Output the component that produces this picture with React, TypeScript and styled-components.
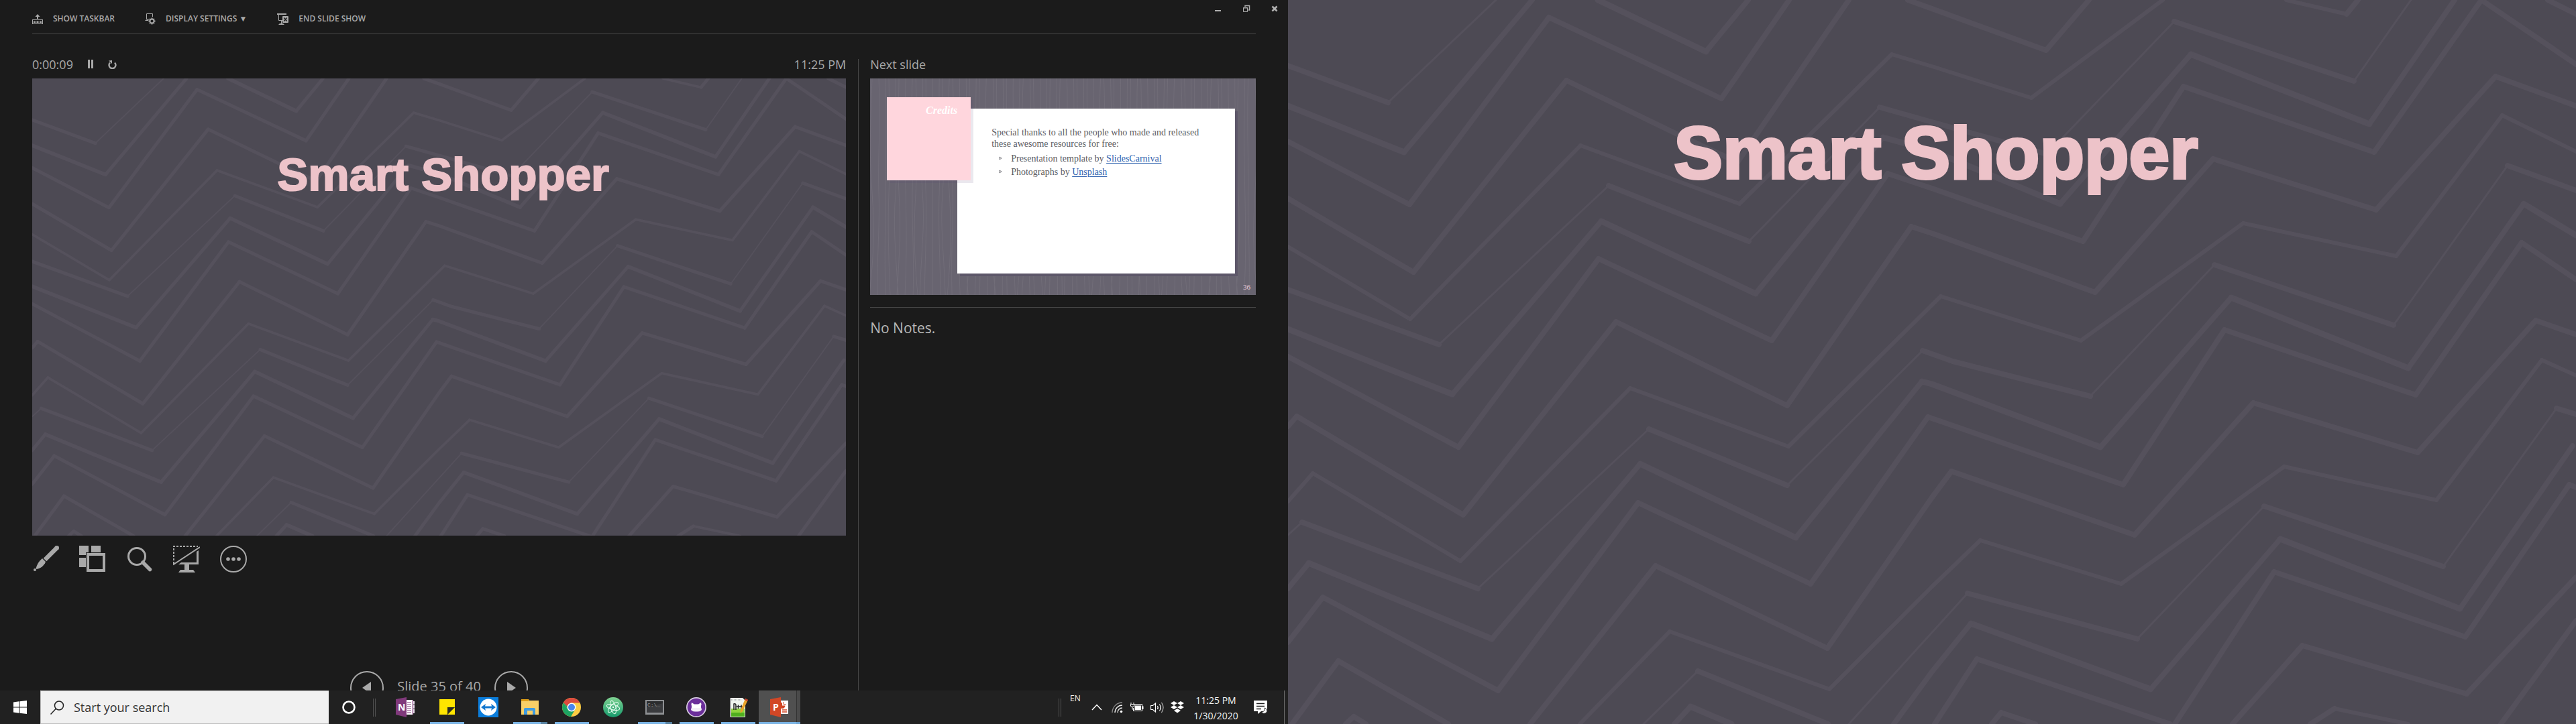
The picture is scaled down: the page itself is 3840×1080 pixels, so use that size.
import React from "react";
import styled, { createGlobalStyle, css } from "styled-components";

const uiFont = `"Open Sans", "Noto Sans", sans-serif`;
const slideFont = `"Liberation Sans", Arial, sans-serif`;
const serifFont = `"Liberation Serif", "Times New Roman", serif`;

const GlobalStyle = createGlobalStyle`
  *, *::before, *::after { box-sizing: border-box; }
  body { margin: 0; background: #1b1b1b; font-family: ${uiFont}; }
  button { border: 0; padding: 0; background: none; color: inherit; font: inherit; cursor: pointer; }
  h1, h2, p, ul { margin: 0; padding: 0; font-weight: inherit; }
  svg { display: block; flex: none; }
`;

/* ------------------------------------------------------------------ */
/* Zigzag slide background                                              */
/* ------------------------------------------------------------------ */

type Trace = { pts: number[]; fall?: number; rise?: number };

// Each trace is a run of x, y pairs on a square grid of 3136 units.
const GRID = 3136;
const traces: Trace[] = [
  { pts: [0, 285, 244, 444, 507, 0], rise: 3 },
  { pts: [0, 460, 282, 660, 595, 0], fall: 9 },
  { pts: [0, 613, 295, 885, 635, 76, 1055, 428, 1220, 0] },
  { pts: [755, 0, 1018, 223, 1120, 0], fall: 9 },
  { pts: [0, 860, 306, 1180, 678, 348, 950, 584, 1095, 703, 1365, 0] },
  { pts: [0, 1070, 298, 1382, 712, 630, 1100, 884, 1470, 235, 1568, 287, 1810, 425, 2130, 0], fall: 6, rise: 6 },
  { pts: [1510, 0, 1568, 38, 1845, 218, 1950, 0] },
  { pts: [0, 1255, 368, 1492, 780, 805, 1122, 1046, 1440, 466, 1568, 528, 1848, 668, 2158, 92, 2595, 350, 2735, 0], rise: 3 },
  { pts: [0, 1425, 400, 1708, 762, 957, 1138, 1272, 1448, 595, 1568, 652, 1880, 883, 2198, 234, 2633, 538, 2840, 0], fall: 9 },
  { pts: [0, 1545, 415, 1936, 756, 1122, 1178, 1476, 1460, 752, 1568, 817, 1936, 1045, 2180, 374, 2645, 658, 2905, 0, 3136, 280] },
  { pts: [0, 1848, 22, 1803, 427, 2230, 798, 1395, 1215, 1756, 1518, 982, 1568, 1010, 1965, 1267, 2253, 687, 2650, 908, 2940, 330, 3136, 460] },
  { pts: [0, 2173, 60, 2050, 420, 2430, 833, 1680, 1218, 1933, 1590, 1282, 1930, 1475, 2326, 966, 2698, 1110, 2956, 498, 3136, 655], fall: 6, rise: 6 },
  { pts: [0, 2318, 35, 2262, 462, 2548, 878, 1858, 1216, 2103, 1545, 1520, 1618, 1564, 1953, 1716, 2256, 1147, 2692, 1408, 2970, 718, 3136, 825], rise: 3 },
  { pts: [0, 2548, 50, 2440, 497, 2766, 858, 2010, 1237, 2328, 1543, 1652, 1568, 1665, 1978, 1938, 2296, 1290, 2728, 1593, 3008, 884, 3136, 1020], fall: 9 },
  { pts: [0, 2783, 85, 2588, 512, 2990, 852, 2178, 1272, 2530, 1558, 1806, 2033, 2098, 2280, 1430, 2746, 1711, 3003, 1050, 3136, 1210] },
  { pts: [10, 3136, 122, 2862, 390, 3136] },
  { pts: [590, 3136, 895, 2451, 1314, 2808, 1568, 2155, 1616, 2040, 2061, 2318, 2350, 1745, 2750, 1961, 3038, 1387, 3136, 1450] },
  { pts: [710, 3136, 930, 2735, 1318, 2986, 1568, 2540, 1686, 2340, 2028, 2528, 2426, 2020, 2796, 2166, 3053, 1558, 3136, 1625], fall: 6, rise: 6 },
  { pts: [865, 3136, 998, 2908, 1315, 3136], rise: 3 },
  { pts: [1365, 3136, 1655, 2570, 2068, 2766, 2376, 2193, 2813, 2454, 3088, 1768, 3136, 1795], rise: 3 },
  { pts: [940, 3136, 980, 3060, 1080, 3136], fall: 9 },
  { pts: [1475, 3136, 1568, 2910, 1663, 2700, 2100, 2984, 2416, 2335, 2853, 2638, 3128, 1930], fall: 9 },
  { pts: [1575, 3136, 1678, 2855, 2148, 3136] },
  { pts: [2160, 3136, 2401, 2478, 2866, 2758, 3120, 2098, 3136, 2112] },
  { pts: [140, 3136, 160, 3104, 190, 3136] },
  { pts: [1713, 3136, 1736, 3088, 1820, 3136] },
  { pts: [2300, 3136, 2470, 2795, 2870, 3006, 3136, 2500] },
  { pts: [2490, 3136, 2548, 3068, 2728, 3136], fall: 6 },
  { pts: [2953, 3136, 3136, 2690] },
  { pts: [2430, 0, 2578, 62, 2605, 0], fall: 6 },
  { pts: [3068, 0, 3136, 62] },
];

function segments(trace: Trace) {
  const falls: string[] = [];
  const rises: string[] = [];
  const p = trace.pts;
  const px = (x: number) => Math.round((x / GRID) * 1920);
  const py = (y: number) => Math.round((y / GRID) * 1080);
  for (let i = 0; i + 3 < p.length; i += 2) {
    const d = `M${px(p[i])} ${py(p[i + 1])}L${px(p[i + 2])} ${py(p[i + 3])}`;
    (p[i + 3] > p[i + 1] ? falls : rises).push(d);
  }
  return { falls: falls.join(""), rises: rises.join("") };
}

const Backdrop = styled.svg`
  position: absolute;
  inset: 0;
  width: 100%;
  height: 100%;
`;

const Zigzag = () => (
  <Backdrop viewBox="0 0 1920 1080" preserveAspectRatio="none" aria-hidden="true">
    <g fill="none" stroke="#55515c" strokeLinecap="round">
      {traces.map((t, i) => {
        const s = segments(t);
        return (
          <g key={i}>
            <path d={s.falls} strokeWidth={t.fall ?? 8} />
            <path d={s.rises} strokeWidth={t.rise ?? 8} />
          </g>
        );
      })}
    </g>
  </Backdrop>
);

const SlideBox = styled.section<{ $full?: boolean }>`
  position: relative;
  overflow: hidden;
  background: #4d4a54;
  ${(p) => (p.$full ? css`height: 100%;` : css`aspect-ratio: 16 / 9;`)}
`;

const SlideTitle = styled.h1<{ $size: number; $top: number }>`
  position: relative;
  padding: ${(p) => p.$top}px 0 0 12px;
  text-align: center;
  font: bold ${(p) => p.$size}px/1 ${slideFont};
  color: #edc3c9;
  -webkit-text-stroke: ${(p) => (p.$size > 100 ? 4 : 2)}px #edc3c9;
  stroke-linejoin: round;
  paint-order: stroke fill;
`;

const Slide = ({ size, top, full }: { size: number; top: number; full?: boolean }) => (
  <SlideBox $full={full}>
    <Zigzag />
    <SlideTitle $size={size} $top={top}>Smart Shopper</SlideTitle>
  </SlideBox>
);

/* ------------------------------------------------------------------ */
/* Presenter view                                                       */
/* ------------------------------------------------------------------ */

const Desktop = styled.div`
  display: grid;
  grid-template-columns: 1fr 1fr;
  height: 100vh;
`;

const Monitor = styled.div`
  display: flex;
  flex-direction: column;
  min-width: 0;
  min-height: 0;
`;

const Presenter = styled.main`
  flex: 1;
  min-height: 0;
  overflow: hidden;
  background: #1b1b1b;
  color: #a9a9a9;
`;

const TopBar = styled.header`
  display: flex;
  justify-content: space-between;
  height: 50px;
  padding: 0 14px 0 48px;
`;

const Commands = styled.nav`
  display: flex;
  gap: 45px;
  padding-top: 18px;
`;

const Command = styled.button`
  display: flex;
  align-items: center;
  gap: 15px;
  height: 20px;
  font-size: 12px;
  font-weight: 600;
  line-height: 20px;
  white-space: nowrap;
`;

const WindowButtons = styled.div`
  display: flex;
  gap: 30px;
  padding-top: 7px;
  height: 19px;
`;

const Rule = styled.hr<{ $inset?: boolean }>`
  height: 1px;
  border: 0;
  margin: ${(p) => (p.$inset ? "0 48px" : "18px 0 0")};
  background: #484848;
`;

const Panes = styled.div`
  display: grid;
  grid-template-columns: 27fr 13fr;
  padding: 37px 48px 0;
`;

const CurrentPane = styled.section`
  padding-right: 18px;
  min-width: 0;
`;

const NextPane = styled.section`
  padding-left: 17px;
  border-left: 1px solid #484848;
  min-width: 0;
`;

const StatusRow = styled.div`
  display: flex;
  align-items: center;
  height: 29px;
  padding-bottom: 14px;
  font-size: 18px;
  line-height: 16px;
`;

const Clock = styled.time`
  margin-left: auto;
`;

const TimerButton = styled.button`
  margin-left: 22px;
`;

const Tools = styled.div`
  display: flex;
  gap: 30px;
  margin-top: 14px;
`;

const Pager = styled.div`
  display: flex;
  justify-content: center;
  gap: 20px;
  margin-top: 147px;
  font-size: 20px;
  line-height: 46px;
`;

const Round = styled.button`
  display: grid;
  place-items: center;
  width: 50px;
  height: 50px;
  border: 2px solid #a9a9a9;
  border-radius: 50%;
`;

const Notes = styled.p`
  margin-top: 12px;
  font-size: 21px;
  line-height: 36px;
  color: #b8b8b8;
`;

/* Credits slide */

const Credits = styled.div`
  position: relative;
  display: flex;
  aspect-ratio: 16 / 9;
  padding: 45px 31px 32px 130px;
  background: #686470;
  overflow: hidden;
  font-family: ${serifFont};
`;

const Paper = styled.div`
  position: relative;
  flex: 1;
  padding: 27px 40px 0 51px;
  background: #fff;
  box-shadow: 4px 4px 0 #5d5769;
  color: #5d5d63;
  font-size: 14px;
  line-height: 17px;
`;

const Tag = styled.h2`
  position: absolute;
  left: 25px;
  top: 28px;
  width: 125px;
  height: 124px;
  padding: 10px 20px 0 0;
  text-align: right;
  background: #ffd6dd;
  box-shadow: 4px 4px 0 rgba(80, 62, 118, 0.12);
  color: #fff;
  font: italic bold 16px/20px ${serifFont};
`;

const Bullets = styled.ul`
  list-style: none;
  padding-top: 3px;
`;

const Bullet = styled.li`
  display: flex;
  align-items: center;
  gap: 13px;
  height: 20px;
  padding-left: 11px;
`;

const CreditLink = styled.a`
  color: #2f62ae;
  text-underline-offset: 2px;
`;

const PageNumber = styled.span`
  position: absolute;
  right: 8px;
  bottom: 5px;
  font-size: 11px;
  line-height: 14px;
  color: #f3ccd3;
`;

const grain = Array.from({ length: 74 }, (_, i) => {
  const x = 3 + i * 8 + ((i * 37) % 5);
  const a = ((i * 13) % 7) - 3;
  const b = ((i * 29) % 9) - 4;
  return `M${x} 0C${x + a} 80 ${x + b} 120 ${x} 170S${x - a} 260 ${x + b} 323`;
}).join("");

const WoodGrain = () => (
  <Backdrop viewBox="0 0 574 323" preserveAspectRatio="none" aria-hidden="true">
    <path d={grain} fill="none" stroke="#716d78" strokeWidth="1" />
  </Backdrop>
);

const NextSlide = () => (
  <Credits>
    <WoodGrain />
    <Paper>
      <p>Special thanks to all the people who made and released these awesome resources for free:</p>
      <Bullets>
        <Bullet>
          <BulletMark />
          <span>Presentation template by <CreditLink href="#slidescarnival">SlidesCarnival</CreditLink></span>
        </Bullet>
        <Bullet>
          <BulletMark />
          <span>Photographs by <CreditLink href="#unsplash">Unsplash</CreditLink></span>
        </Bullet>
      </Bullets>
    </Paper>
    <Tag>Credits</Tag>
    <PageNumber>36</PageNumber>
  </Credits>
);

const BulletMark = () => (
  <svg width="5" height="6" viewBox="0 0 5 6" aria-hidden="true">
    <path d="M1 1L4 3L1 5Z" fill="none" stroke="#77777d" />
  </svg>
);

/* Toolbar icons */

const TaskbarIcon = () => (
  <svg width="16" height="16" viewBox="0 0 16 16" fill="#a9a9a9">
    <path d="M8 1L11.500 5H9V8H7V5H4.500Z" />
    <path d="M0 9H16V16H0ZM1 10V15H15V10Z" fillRule="evenodd" />
    <path d="M2 11.500H5V14H2ZM6.500 11.500H9.500V14H6.500ZM11 11.500H14V14H11Z" />
  </svg>
);

const DisplayIcon = () => (
  <svg width="16" height="18" viewBox="0 0 16 18" fill="none" stroke="#a9a9a9">
    <path d="M7 9.500H2.500V1.500H11.500V6" />
    <path d="M0 12L1.500 10.500H5.500L5 12Z" fill="#a9a9a9" stroke="none" />
    <circle cx="10.500" cy="12.500" r="3" strokeWidth="1.800" />
    <path d="M10.500 7.500V9M10.500 16V17.500M5.500 12.500H7M14 12.500H15.500M7 9L8 10M13 15L14 16M7 16L8 15M13 10L14 9" strokeWidth="1.800" />
  </svg>
);

const EndIcon = () => (
  <svg width="17" height="18" viewBox="0 0 17 18" fill="#a9a9a9">
    <path d="M0 1H14V3H0Z" />
    <path d="M2.500 3V11.500H8" fill="none" stroke="#a9a9a9" />
    <path d="M6 11H7V16H9L11 18H2L4 16H6Z" />
    <rect x="8" y="5" width="9" height="10" rx="1" />
    <path d="M10.500 7.500L14.500 12.500M14.500 7.500L10.500 12.500" stroke="#1b1b1b" strokeWidth="1.500" />
  </svg>
);

const ResetIcon = () => (
  <svg width="13" height="14" viewBox="0 0 13 14" fill="none" stroke="#a9a9a9" strokeWidth="2.400">
    <path d="M3 4.500A5 5 0 1 0 10 4.500" />
    <path d="M1 1.500L6 1L6 6Z" fill="#a9a9a9" stroke="none" />
  </svg>
);

const ToolIcon = ({ children }: { children: React.ReactNode }) => (
  <svg width="40" height="41" viewBox="0 0 40 41" fill="#a9a9a9">{children}</svg>
);

const PenTool = () => (
  <ToolIcon>
    <path d="M37 4L19 22" stroke="#a9a9a9" strokeWidth="6.500" strokeLinecap="butt" />
    <circle cx="36.700" cy="4.300" r="3.300" />
    <path d="M15 20L20 25C18 31 12 35 6.500 36L5.500 35C7 29 10 24 15 20Z" />
    <circle cx="4" cy="37" r="2" />
  </ToolIcon>
);

const GridTool = () => (
  <ToolIcon>
    <path d="M0 1H14V11H10V15H0ZM18 1H32V11H18ZM0 19H10V33H0Z" />
    <path d="M11 12H39V40H11ZM15 16V36H35V16Z" fillRule="evenodd" />
  </ToolIcon>
);

const ZoomTool = () => (
  <ToolIcon>
    <circle cx="16" cy="17" r="12.500" fill="none" stroke="#a9a9a9" strokeWidth="3" />
    <path d="M25 26L35.500 36.500" stroke="#a9a9a9" strokeWidth="5.500" strokeLinecap="round" />
  </ToolIcon>
);

const BlackoutTool = () => (
  <ToolIcon>
    <path d="M1 28V2H37" fill="none" stroke="#a9a9a9" strokeWidth="2" strokeDasharray="3 2" />
    <path d="M0 29.500L40 3" stroke="#a9a9a9" strokeWidth="2" />
    <path d="M38 8V29H8L12 26H35V10Z" />
    <path d="M17 29H24V37H30L33 41H8L11 37H17Z" />
  </ToolIcon>
);

const MoreTool = () => (
  <ToolIcon>
    <circle cx="20" cy="21" r="19" fill="none" stroke="#a9a9a9" strokeWidth="2" />
    <circle cx="12" cy="21" r="2.800" />
    <circle cx="20" cy="21" r="2.800" />
    <circle cx="28" cy="21" r="2.800" />
  </ToolIcon>
);

const PresenterView = () => (
  <Presenter>
    <TopBar>
      <Commands>
        <Command><TaskbarIcon />SHOW TASKBAR</Command>
        <Command><DisplayIcon />DISPLAY SETTINGS ▼</Command>
        <Command><EndIcon />END SLIDE SHOW</Command>
      </Commands>
      <WindowButtons>
        <button aria-label="Minimize">
          <svg width="12" height="12" viewBox="0 0 12 12"><path d="M1 8H10V10H1Z" fill="#b0b0b0" /></svg>
        </button>
        <button aria-label="Restore">
          <svg width="12" height="12" viewBox="0 0 12 12" fill="none" stroke="#b0b0b0">
            <path d="M4 3V1.500H10.500V8H9M3.500 1.500H11" strokeWidth="1.500" />
            <path d="M1.500 4.500H7.500V10.500H1.500Z M1 5H8" />
          </svg>
        </button>
        <button aria-label="Close">
          <svg width="12" height="12" viewBox="0 0 12 12"><path d="M2.500 2.500L9.500 9.500M9.500 2.500L2.500 9.500" stroke="#b0b0b0" strokeWidth="2.600" /></svg>
        </button>
      </WindowButtons>
    </TopBar>
    <Rule $inset />
    <Panes>
      <CurrentPane>
        <StatusRow>
          <span>0:00:09</span>
          <TimerButton aria-label="Pause">
            <svg width="8" height="13" viewBox="0 0 8 13"><path d="M0 0H3V13H0ZM5 0H8V13H5Z" fill="#a9a9a9" /></svg>
          </TimerButton>
          <TimerButton aria-label="Restart timer"><ResetIcon /></TimerButton>
          <Clock>11:25 PM</Clock>
        </StatusRow>
        <Slide size={69} top={109} />
        <Tools>
          <button aria-label="Pen"><PenTool /></button>
          <button aria-label="See all slides"><GridTool /></button>
          <button aria-label="Zoom"><ZoomTool /></button>
          <button aria-label="Black screen"><BlackoutTool /></button>
          <button aria-label="More options"><MoreTool /></button>
        </Tools>
        <Pager>
          <Round aria-label="Previous slide">
            <svg width="16" height="18" viewBox="0 0 16 18"><path d="M14 0V18L1 9Z" fill="#a9a9a9" /></svg>
          </Round>
          <span>Slide 35 of 40</span>
          <Round aria-label="Next slide">
            <svg width="16" height="18" viewBox="0 0 16 18"><path d="M2 0V18L15 9Z" fill="#a9a9a9" /></svg>
          </Round>
        </Pager>
      </CurrentPane>
      <NextPane>
        <StatusRow>Next slide</StatusRow>
        <NextSlide />
        <Rule />
        <Notes>No Notes.</Notes>
      </NextPane>
    </Panes>
  </Presenter>
);

/* ------------------------------------------------------------------ */
/* Windows taskbar                                                      */
/* ------------------------------------------------------------------ */

const Bar = styled.footer`
  display: flex;
  align-items: stretch;
  height: 50px;
  background: #212121;
  color: #f2f2f2;
`;

const Start = styled.button`
  display: grid;
  place-items: center;
  width: 60px;
`;

const Search = styled.label`
  display: flex;
  align-items: center;
  gap: 14px;
  width: 430px;
  padding-left: 14px;
  border: 1px solid #bdbdbd;
  border-right: 0;
  background: #f1f1f1;
`;

const SearchInput = styled.input`
  flex: 1;
  min-width: 0;
  border: 0;
  outline: 0;
  padding: 0;
  background: none;
  font: 18px ${uiFont};
  color: #333;
  &::placeholder { color: #333; opacity: 1; }
`;

const Grip = styled.span`
  align-self: center;
  width: 4px;
  height: 27px;
  margin: 0 13px 0 6px;
  border: solid #505050;
  border-width: 0 1px;
`;

const TaskButton = styled.button<{ $state?: "open" | "stacked" | "active" }>`
  position: relative;
  display: grid;
  place-items: center;
  width: 62px;
  background: ${(p) => (p.$state === "active" ? "linear-gradient(90deg, #505050 56px, #333 56px 57px, #4a4a4a 57px)" : "none")};
  &::after {
    content: "";
    position: absolute;
    bottom: 0;
    left: ${(p) => (p.$state === "active" ? 0 : 6)}px;
    right: ${(p) => (p.$state === "active" ? 0 : 5)}px;
    height: 3px;
    background: ${(p) =>
      !p.$state ? "none" : p.$state === "open" ? "#7ab3e3" : p.$state === "active"
        ? "linear-gradient(90deg, #7ab3e3 56px, #6da4d2 56px)"
        : "linear-gradient(90deg, #7ab3e3 41px, #56809f 41px)"};
  }
`;

const Tray = styled.div`
  display: flex;
  margin-left: auto;
`;

const TrayGrip = styled(Grip)`
  margin: 0;
`;

const Language = styled.button`
  align-self: flex-start;
  width: 38px;
  padding: 4px 0 0 13px;
  text-align: left;
  font-size: 12px;
  line-height: 16px;
`;

const TrayButton = styled.button<{ $width?: number }>`
  display: grid;
  place-items: center;
  width: ${(p) => p.$width ?? 30}px;
`;

const DateTime = styled.button`
  width: 85px;
  padding-top: 1px;
  font-size: 14px;
  line-height: 23px;
  text-align: center;
`;

const ShowDesktop = styled.button`
  width: 6px;
  margin-left: 11px;
  border-left: 1px solid #6e6e6e;
`;

const Icon30 = ({ children }: { children: React.ReactNode }) => (
  <svg width="30" height="30" viewBox="0 0 30 30">{children}</svg>
);

const LetterMark = styled.text`
  font: bold 14px ${uiFont};
  fill: #fff;
`;

const OneNote = () => (
  <Icon30>
    <path d="M16 4H27V26H16Z" fill="#fff" />
    <path d="M27 6H29V11H27ZM27 12H29V17H27ZM27 18H29V24H27Z" fill="#e8d9ea" />
    <path d="M18 8H24M18 11H24M18 14H24M18 17H24M18 20H24M18 23H24" stroke="#80397b" />
    <path d="M26 4V26" stroke="#80397b" />
    <path d="M1 3L17 0V30L1 26Z" fill="#80397b" />
    <LetterMark x="4" y="20">N</LetterMark>
  </Icon30>
);

const Sticky = () => (
  <Icon30>
    <path d="M4 3H27V15L16 26H4Z" fill="#ffe500" />
    <path d="M27 15V26H16Z" fill="#ffe500" />
    <path d="M16 26V15H27Z" fill="#2b2b20" />
  </Icon30>
);

const TeamViewer = () => (
  <Icon30>
    <rect width="30" height="30" fill="#0b7ddb" />
    <circle cx="15" cy="15" r="12.500" fill="#fff" />
    <path d="M4 15L11 10L10 13.500H20L19 10L26 15L19 20L20 16.500H10L11 20Z" fill="#1277cf" />
  </Icon30>
);

const Explorer = () => (
  <Icon30>
    <path d="M2 3H13L14 5H28V26H2Z" fill="#f8cf67" />
    <path d="M2 3H13L13 6H2Z" fill="#dd9d17" />
    <path d="M6 26V18Q6 16 8 16H21Q23 16 23 18V26H19V20H11V26Z" fill="#3f9be0" />
  </Icon30>
);

const Chrome = () => (
  <Icon30>
    <circle cx="15" cy="15" r="14" fill="#fbcb43" />
    <path d="M2.900 8A14 14 0 0 0 14 29L20.500 18L15 15L9.500 18.500Z" fill="#1da362" />
    <path d="M2.900 8L9.500 18.500L15 8.500Z" fill="#1da362" />
    <path d="M2.900 8A14 14 0 0 1 27.500 8.500H15Q10 9 9 14Z" fill="#dd4b3e" />
    <circle cx="15" cy="15" r="6.500" fill="#fff" />
    <circle cx="15" cy="15" r="5" fill="#4a86ee" />
  </Icon30>
);

const Atom = () => (
  <Icon30>
    <defs>
      <linearGradient id="atom-green" x1="0" y1="0" x2="0" y2="1">
        <stop offset="0" stopColor="#7fd292" />
        <stop offset="1" stopColor="#169a6c" />
      </linearGradient>
    </defs>
    <circle cx="15" cy="15" r="15" fill="url(#atom-green)" />
    <g fill="none" stroke="#e9fff3">
      <ellipse cx="15" cy="15" rx="10" ry="3.800" transform="rotate(15 15 15)" />
      <ellipse cx="15" cy="15" rx="10" ry="3.800" transform="rotate(75 15 15)" />
      <ellipse cx="15" cy="15" rx="10" ry="3.800" transform="rotate(135 15 15)" />
    </g>
    <circle cx="15" cy="15" r="1.200" fill="#fff" />
  </Icon30>
);

const PromptText = styled.text`
  font: 8px "Liberation Mono", monospace;
  fill: #9a9a9a;
`;

const Terminal = () => (
  <Icon30>
    <rect x="1" y="4" width="28" height="22" fill="#8e9093" />
    <rect x="3" y="6" width="24" height="17" fill="#2b2c2e" />
    <path d="M3 15L27 9V23H3Z" fill="#3a3b3e" />
    <PromptText x="4" y="14">C:\_</PromptText>
  </Icon30>
);

const GitHubDesktop = () => (
  <Icon30>
    <circle cx="15" cy="15" r="15" fill="#d9cfe2" />
    <circle cx="15" cy="15" r="13.300" fill="#6b2f9a" />
    <path d="M8 8L12 10.500H18L22 8Q23 11 22 13Q23 20 18 20.500H12Q7 20 8 13Q7 11 8 8Z" fill="#fff" />
    <path d="M8 16Q6 18 8 20Q11 22 15 21.500Q19 22 22 20Q24 18 22 16Z" fill="#f3eef7" />
  </Icon30>
);

const NotePad = () => (
  <Icon30>
    <path d="M4 1H22L26 5V30H4Z" fill="#f1f5ee" />
    <path d="M5 17H25V29H5Z" fill="#8ed43e" />
    <path d="M5 23H25V29H5Z" fill="#4fae1e" />
    <path d="M4 1V30H26" fill="none" stroke="#d6d6d6" />
    <path d="M5 4H20" stroke="#8b9099" strokeDasharray="1 1" />
    <path d="M9 19V10Q12 9 12 12V19M13 14H18M15.500 11.500V17M18 14H22M20 11.500V17" fill="none" stroke="#222" strokeWidth="1.500" />
    <path d="M26 2L30 4L22 21L18.500 24L19 19Z" fill="#e9a32a" />
    <path d="M26 2L30 4L29 6L25 4Z" fill="#c4372e" />
  </Icon30>
);

const PowerPoint = () => (
  <Icon30>
    <path d="M16 5H28V25H16Z" fill="#fff" />
    <path d="M19 8A4.500 4.500 0 1 0 23.500 12.500H19Z" fill="#d24726" />
    <path d="M21 7V10.500H24.500" fill="none" stroke="#d24726" />
    <path d="M19 19H26M19 22H26" stroke="#d24726" strokeWidth="1.500" />
    <path d="M1 3L17 0V30L1 26Z" fill="#d24726" />
    <LetterMark x="5" y="20">P</LetterMark>
  </Icon30>
);

const Taskbar = () => (
  <Bar>
    <Start aria-label="Start">
      <svg width="20" height="20" viewBox="0 0 20 20" fill="#fff">
        <path d="M0 2.500L8.500 1.300V9.500H0ZM9.500 1.200L20 0V9.500H9.500ZM0 10.500H8.500V18.700L0 17.500ZM9.500 10.500H20V20L9.500 18.800Z" />
      </svg>
    </Start>
    <Search htmlFor="taskbar-search">
      <svg width="21" height="21" viewBox="0 0 21 21" fill="none" stroke="#222" strokeWidth="1.500" aria-hidden="true">
        <circle cx="13" cy="7.500" r="6.500" />
        <path d="M8.500 12L0.500 20.500" />
      </svg>
      <SearchInput id="taskbar-search" aria-label="Search" placeholder="Start your search" />
    </Search>
    <Start aria-label="Cortana">
      <svg width="20" height="20" viewBox="0 0 20 20"><circle cx="10" cy="10" r="8.500" fill="none" stroke="#fff" strokeWidth="2.600" /></svg>
    </Start>
    <Grip />
    <TaskButton aria-label="OneNote"><OneNote /></TaskButton>
    <TaskButton aria-label="Sticky Notes" $state="open"><Sticky /></TaskButton>
    <TaskButton aria-label="TeamViewer"><TeamViewer /></TaskButton>
    <TaskButton aria-label="File Explorer" $state="stacked"><Explorer /></TaskButton>
    <TaskButton aria-label="Chrome" $state="open"><Chrome /></TaskButton>
    <TaskButton aria-label="Atom"><Atom /></TaskButton>
    <TaskButton aria-label="Command Prompt" $state="stacked"><Terminal /></TaskButton>
    <TaskButton aria-label="GitHub Desktop" $state="open"><GitHubDesktop /></TaskButton>
    <TaskButton aria-label="Notepad++" $state="open"><NotePad /></TaskButton>
    <TaskButton aria-label="PowerPoint" $state="active"><PowerPoint /></TaskButton>
    <Tray>
      <TrayGrip />
      <Language>EN</Language>
      <TrayButton aria-label="Show hidden icons">
        <svg width="16" height="10" viewBox="0 0 16 10"><path d="M1 9L8 1.500L15 9" fill="none" stroke="#fff" strokeWidth="1.500" /></svg>
      </TrayButton>
      <TrayButton aria-label="Network">
        <svg width="17" height="17" viewBox="0 0 17 17" fill="none" stroke="#eee" strokeWidth="1.300">
          <path d="M1 16A15 15 0 0 1 16 1" stroke="#8c8c8c" />
          <path d="M5 16A11 11 0 0 1 16 5M9 16A7 7 0 0 1 16 9" />
          <circle cx="14.500" cy="14.500" r="1.800" fill="#fff" stroke="none" />
        </svg>
      </TrayButton>
      <TrayButton aria-label="Battery">
        <svg width="20" height="14" viewBox="0 0 20 14" fill="none" stroke="#fff">
          <path d="M5 2.500H17.500V12.500H4.500V8" />
          <path d="M6.500 4.500H16V11H6.500Z" fill="#fff" stroke="none" />
          <path d="M18.500 5.500V10" strokeWidth="2" />
          <path d="M1 0V2.500M5 0V2.500M0.500 2.500H5.500V5Q5.500 6.500 3 6.500Q0.500 6.500 0.500 5ZM3 6.500V10H5" />
        </svg>
      </TrayButton>
      <TrayButton aria-label="Volume">
        <svg width="20" height="17" viewBox="0 0 20 17" fill="none" stroke="#fff" strokeWidth="1.200">
          <path d="M0.500 5.500H3.500L7.500 2V15L3.500 11.500H0.500Z" />
          <path d="M10.500 6Q12 8.500 10.500 11M13.500 3.500Q16.500 8.500 13.500 13.500" />
          <path d="M16.500 1Q21.500 8.500 16.500 16" stroke="#bbb" />
        </svg>
      </TrayButton>
      <TrayButton aria-label="Dropbox">
        <svg width="20" height="18" viewBox="0 0 20 18" fill="#fff">
          <path d="M5 0L10 3L5 6L0 3ZM15 0L20 3L15 6L10 3ZM5 6L10 9L5 12L0 9ZM15 6L20 9L15 12L10 9ZM10 11L15 14L10 17.500L5 14Z" />
        </svg>
      </TrayButton>
      <DateTime>
        <div>11:25 PM</div>
        <div>1/30/2020</div>
      </DateTime>
      <TrayButton $width={48} aria-label="Notifications">
        <svg width="20" height="21" viewBox="0 0 20 21">
          <path d="M0 0H20V16H11L6 20V16H0Z" fill="#fff" />
          <path d="M4 4.500H16M4 8.500H16M4 12.500H11" stroke="#212121" strokeWidth="1.300" />
          <path d="M16.500 11Q17 16 11.500 17.500A5 5 0 0 0 20 16Q20 12.500 16.500 11Z" fill="#fff" stroke="#212121" />
        </svg>
      </TrayButton>
      <ShowDesktop aria-label="Show desktop" />
    </Tray>
  </Bar>
);

export default function App() {
  return (
    <>
      <GlobalStyle />
      <Desktop>
        <Monitor>
          <PresenterView />
          <Taskbar />
        </Monitor>
        <Slide size={109} top={174} full />
      </Desktop>
    </>
  );
}
